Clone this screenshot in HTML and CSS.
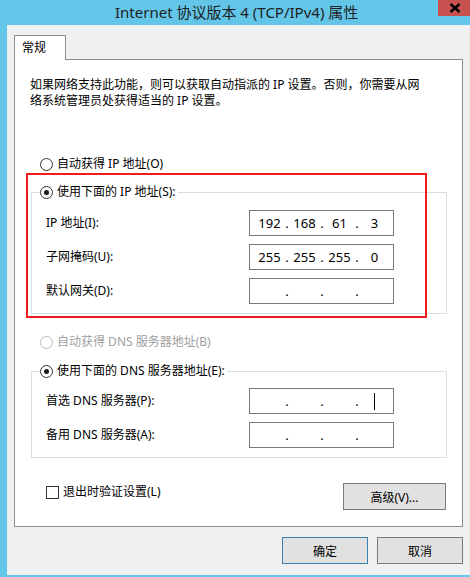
FILE: index.html
```html
<!DOCTYPE html>
<html lang="zh-CN">
<head>
  <meta charset="UTF-8">
  <title>Internet 协议版本 4 (TCP/IPv4) 属性</title>
  <link rel="stylesheet" href="styles.css">
</head>
<body>
  <div class="window">
    <div class="titlebar">
      <div class="title">Internet 协议版本 4 (TCP/IPv4) 属性</div>
      <div class="close">
        <svg width="12" height="10" viewBox="0 0 12 10"><path d="M1.5 1 L10.5 9 M10.5 1 L1.5 9" stroke="#000" stroke-width="2.4" fill="none"/></svg>
      </div>
    </div>

    <div class="client">
      <div class="tabs">
        <div class="tab">常规</div>
      </div>

      <div class="panel">
        <p class="desc">如果网络支持此功能，则可以获取自动指派的 IP 设置。否则，你需要从网<br>络系统管理员处获得适当的 IP 设置。</p>

        <label class="option first"><span class="radio"></span>自动获得 IP 地址(O)</label>

        <div class="group">
          <label class="legend"><span class="radio checked"></span>使用下面的 IP 地址(S):</label>
          <div class="row">
            <span class="label">IP 地址(I):</span>
            <div class="ipbox"><span class="seg">192</span><span class="dot">.</span><span class="seg">168</span><span class="dot">.</span><span class="seg">61</span><span class="dot">.</span><span class="seg">3</span></div>
          </div>
          <div class="row">
            <span class="label">子网掩码(U):</span>
            <div class="ipbox"><span class="seg">255</span><span class="dot">.</span><span class="seg">255</span><span class="dot">.</span><span class="seg">255</span><span class="dot">.</span><span class="seg">0</span></div>
          </div>
          <div class="row">
            <span class="label">默认网关(D):</span>
            <div class="ipbox"><span class="seg"></span><span class="dot">.</span><span class="seg"></span><span class="dot">.</span><span class="seg"></span><span class="dot">.</span><span class="seg"></span></div>
          </div>
        </div>

        <label class="option disabled"><span class="radio"></span>自动获得 DNS 服务器地址(B)</label>

        <div class="group dns">
          <label class="legend"><span class="radio checked"></span>使用下面的 DNS 服务器地址(E):</label>
          <div class="row">
            <span class="label">首选 DNS 服务器(P):</span>
            <div class="ipbox"><span class="seg"></span><span class="dot">.</span><span class="seg"></span><span class="dot">.</span><span class="seg"></span><span class="dot">.</span><span class="seg"><span class="caret"></span></span></div>
          </div>
          <div class="row">
            <span class="label">备用 DNS 服务器(A):</span>
            <div class="ipbox"><span class="seg"></span><span class="dot">.</span><span class="seg"></span><span class="dot">.</span><span class="seg"></span><span class="dot">.</span><span class="seg"></span></div>
          </div>
        </div>

        <div class="panel-foot">
          <label class="check"><span class="box"></span>退出时验证设置(L)</label>
          <button class="btn advanced">高级(V)...</button>
        </div>

        <div class="highlight"></div>
      </div>

      <div class="footer">
        <button class="btn default">确定</button>
        <button class="btn">取消</button>
      </div>
    </div>
  </div>
</body>
</html>
```

FILE: styles.css
```css
* {
  box-sizing: border-box;
}
body {
  margin: 0;
  font-family: "Noto Sans", "Noto Sans CJK SC", sans-serif;
  font-size: 12px;
  line-height: 16px;
  color: #000;
  background: #63c6e9;
}
.window {
  width: 470px;
  height: 577px;
  background: #63c6e9;
  overflow: hidden;
}
.titlebar {
  display: flex;
  height: 25px;
}
.title {
  flex: 1;
  padding: 2px 0 0 115px;
  font-size: 15px;
  line-height: 20px;
  color: #1e1e1e;
}
.close {
  width: 32px;
  height: 16px;
  background: #c75050;
  display: flex;
  justify-content: center;
  align-items: center;
  padding-left: 2px;
}
.client {
  margin-left: 7px;
  height: 550px;
  background: #f0f0f0;
  padding: 10px 7px 0 7px;
}
.tabs {
  display: flex;
}
.tab {
  position: relative;
  z-index: 1;
  width: 52px;
  height: 25px;
  margin-bottom: -1px;
  padding: 4px 0 0 7px;
  background: #fff;
  border: 1px solid #898c95;
  border-bottom: none;
}
.panel {
  position: relative;
  height: 468px;
  background: #fff;
  border: 1px solid #898c95;
  padding: 17px 0 0 0;
}
.desc {
  margin: 0 0 0 15px;
}
.option {
  display: flex;
  align-items: center;
  margin-left: 25px;
}
.option.first {
  margin-top: 47px;
}
.option.disabled {
  margin-top: 20px;
  color: #a0a0a0;
}
.radio {
  position: relative;
  width: 13px;
  height: 13px;
  margin-right: 4px;
  border: 1px solid #333;
  border-radius: 50%;
  background: #fff;
}
.radio.checked::after {
  content: "";
  position: absolute;
  left: 3px;
  top: 3px;
  width: 5px;
  height: 5px;
  border-radius: 50%;
  background: #1a1a1a;
}
.disabled .radio {
  border-color: #bcbcbc;
}
.group {
  margin: 20px 0 0 16px;
  width: 416px;
  border: 1px solid #d5dfe5;
  padding: 0 0 9px 14px;
}
.group.dns {
  margin-top: 21px;
}
.legend {
  display: inline-flex;
  align-items: center;
  margin: -9px 0 10px -6px;
  padding: 0 2px 0 0;
  background: #fff;
  vertical-align: top;
}
.dns .legend {
  margin-bottom: 7px;
}
.row {
  display: flex;
  align-items: center;
  height: 26px;
  margin-bottom: 8px;
}
.row:last-child {
  margin-bottom: 0;
}
.label {
  width: 203px;
}
.ipbox {
  display: flex;
  align-items: center;
  width: 145px;
  height: 26px;
  border: 1px solid #7a7a7a;
  padding-left: 4px;
  font-size: 13px;
}
.seg {
  display: flex;
  justify-content: center;
  align-items: center;
  width: 31px;
  height: 17px;
}
.dot {
  width: 4px;
  text-align: center;
}
.caret {
  width: 1px;
  height: 17px;
  background: #000;
}
.panel-foot {
  display: flex;
  justify-content: space-between;
  align-items: flex-start;
  margin: 25px 16px 0 31px;
}
.check {
  display: flex;
  align-items: center;
  margin-top: 1px;
}
.box {
  width: 13px;
  height: 13px;
  margin-right: 4px;
  border: 1px solid #333;
  background: #fff;
}
.btn {
  width: 86px;
  height: 27px;
  padding: 0;
  font-family: inherit;
  font-size: 12px;
  color: #000;
  background: #e1e1e1;
  border: 1px solid #7a7a7a;
  border-radius: 0;
}
.btn.advanced {
  width: 103px;
}
.btn.default {
  border-color: #3c7fb1;
}
.highlight {
  position: absolute;
  left: 11px;
  top: 113px;
  width: 401px;
  height: 145px;
  border: 2px solid #f01c1c;
  pointer-events: none;
}
.footer {
  display: flex;
  justify-content: flex-end;
  gap: 9px;
  margin-top: 10px;
}
```
